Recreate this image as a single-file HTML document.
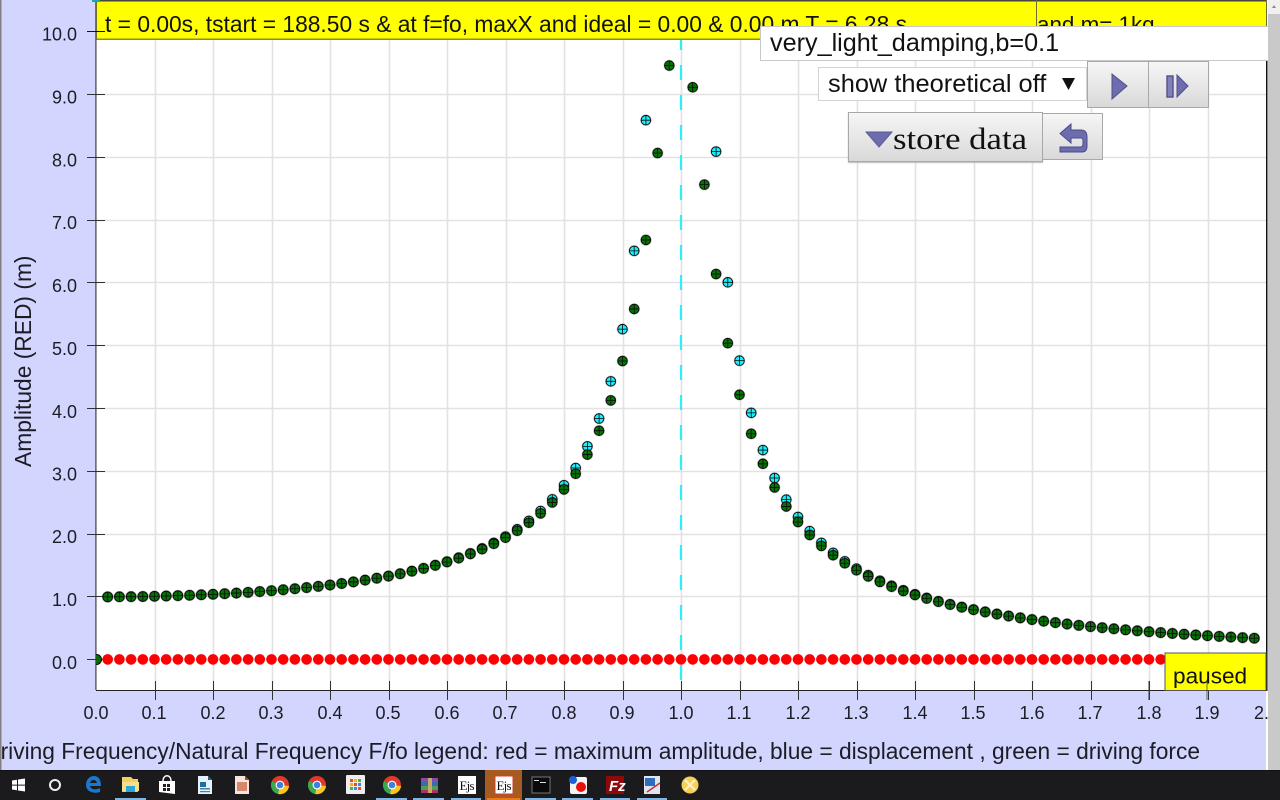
<!DOCTYPE html>
<html>
<head>
<meta charset="utf-8">
<style>
html,body{margin:0;padding:0;width:1280px;height:800px;overflow:hidden;background:#fff}
#root{position:relative;width:1280px;height:800px;overflow:hidden;font-family:"Liberation Sans",Arial,sans-serif;color:#111}
.abs{position:absolute}
svg{position:absolute;left:0;top:0;display:block}
.btn{position:absolute;box-sizing:border-box;background:linear-gradient(#f6f6f6,#d9d9d9);border:1px solid #a8a8a8}
</style>
</head>
<body>
<div id="root">
<svg id="main" width="1280" height="800" viewBox="0 0 1280 800" xmlns="http://www.w3.org/2000/svg" font-family="Liberation Sans, Arial, sans-serif">
  <rect x="0" y="0" width="1280" height="800" fill="#fff"/>
  <rect x="0" y="0" width="1266" height="770" fill="#d2d6fe"/>
  <rect x="0" y="0" width="1.5" height="770" fill="#808080"/>
  <rect x="1268" y="14" width="12" height="756" fill="#c9c9c9"/>
  <rect x="1268" y="0" width="12" height="14" fill="#f0f0f0"/>
  <path d="M1272 8L1274 5L1276 8Z" fill="#888"/>
  <rect x="96" y="39" width="1170" height="651" fill="#fff"/>
  <g id="grid" stroke="#e2e2e2" stroke-width="1.6" fill="none"></g>
  <rect x="95" y="0" width="1.7" height="690" fill="#707070"/>
  <rect x="96" y="690" width="1170" height="1" fill="#222"/>
  <rect x="1266" y="61" width="1.5" height="630" fill="#111"/>
  <line x1="681" y1="35" x2="681" y2="690" stroke="#2ff0fa" stroke-width="2.2" stroke-dasharray="15 15"/>
  <g id="ticks" stroke="#333" stroke-width="1"></g>
  <svg x="96" y="39" width="1170" height="651" viewBox="96 39 1170 651"><g id="dots"></g></svg>

  <g fill="#1c1c24" font-size="18" text-anchor="end">
    <text x="77" y="40.5">10.0</text><text x="77" y="103.5">9.0</text><text x="77" y="166.5">8.0</text>
    <text x="77" y="229">7.0</text><text x="77" y="292">6.0</text><text x="77" y="355">5.0</text>
    <text x="77" y="418">4.0</text><text x="77" y="480.5">3.0</text><text x="77" y="543">2.0</text>
    <text x="77" y="606">1.0</text><text x="77" y="669">0.0</text>
  </g>
  <g fill="#1c1c24" font-size="18" text-anchor="middle">
    <text x="96" y="719">0.0</text><text x="154" y="719">0.1</text><text x="213" y="719">0.2</text>
    <text x="271" y="719">0.3</text><text x="330" y="719">0.4</text><text x="388" y="719">0.5</text>
    <text x="447" y="719">0.6</text><text x="505" y="719">0.7</text><text x="564" y="719">0.8</text>
    <text x="622" y="719">0.9</text><text x="681" y="719">1.0</text><text x="739" y="719">1.1</text>
    <text x="798" y="719">1.2</text><text x="856" y="719">1.3</text><text x="915" y="719">1.4</text>
    <text x="973" y="719">1.5</text><text x="1032" y="719">1.6</text><text x="1090" y="719">1.7</text>
    <text x="1149" y="719">1.8</text><text x="1207" y="719">1.9</text>
  </g>
  <text x="1254" y="719" font-size="18" fill="#1c1c24">2.</text>
  <text transform="translate(31,467) rotate(-90)" font-size="22.8" fill="#1c1c24">Amplitude (RED) (m)</text>
  <text x="1200" y="759" text-anchor="end" font-size="22.76" fill="#1c1c24">riving Frequency/Natural Frequency F/fo legend: red = maximum amplitude, blue = displacement , green = driving force</text>

  <!-- yellow top bar -->
  <rect x="96" y="1" width="1171" height="38" fill="#ffff00"/>
  <rect x="96" y="0" width="1171" height="1.5" fill="#444"/>
  <rect x="96" y="38.5" width="1171" height="1.5" fill="#8f8f20"/>
  <rect x="96" y="0" width="1" height="40" fill="#6d6d30"/>
  <rect x="92" y="0" width="8" height="2" fill="#18a8b0"/>
  <rect x="1036" y="0" width="1" height="30" fill="#6d6d30"/>
  <rect x="1266" y="0" width="1" height="30" fill="#6d6d30"/>
  <line x1="87" y1="31.5" x2="105" y2="31.5" stroke="#111" stroke-width="1"/>
  <text x="105" y="32" font-size="22.8" fill="#111">t = 0.00s, tstart = 188.50 s &amp; at f=fo, maxX and ideal = 0.00 &amp; 0.00 m T = 6.28 s</text>
  <text x="1037" y="32" font-size="22.4" fill="#111">and m= 1kg</text>

  <!-- paused -->
  <rect x="1165" y="653" width="101" height="37.5" fill="#ffff00" stroke="#555" stroke-width="1"/>
  <text x="1173" y="683.5" font-size="22.6" fill="#111">paused</text>
  <line x1="1149" y1="681" x2="1149" y2="700" stroke="#333" stroke-width="1"/>
  <line x1="1207" y1="681" x2="1207" y2="700" stroke="#333" stroke-width="1" opacity=".7"/>
</svg>

<!-- text input -->
<div class="abs" style="left:760px;top:26px;width:508px;height:35px;box-sizing:border-box;background:#fff;border:1px solid #c8c8c8;border-right:0;font-size:25.2px;line-height:33px;padding-left:9px;color:#111;white-space:nowrap">very_light_damping,b=0.1</div>
<!-- select -->
<div class="abs" style="left:818px;top:67px;width:269px;height:34px;box-sizing:border-box;background:#fff;border:1px solid #d4d4d4;font-size:25.4px;line-height:32px;padding-left:9px;color:#111;white-space:nowrap">show theoretical off</div>
<svg width="1280" height="800" style="pointer-events:none">
  <path d="M1062 78H1075L1068.5 90Z" fill="#111"/>
</svg>

<!-- buttons -->
<div class="btn" style="left:1087px;top:61px;width:62px;height:47px"></div>
<div class="btn" style="left:1148px;top:61px;width:61px;height:47px"></div>
<div class="btn" style="left:848px;top:112px;width:195px;height:50px;box-shadow:0 1px 1px #bbb"></div>
<div class="btn" style="left:1042px;top:113px;width:61px;height:47px"></div>
<svg width="1280" height="800" style="pointer-events:none">
  <path d="M1112 74L1127 86L1112 99Z" fill="#6c6cae" stroke="#50508c" stroke-width="1"/>
  <rect x="1167" y="76" width="6" height="21" fill="#8080bb" stroke="#50508c" stroke-width="1.4"/>
  <path d="M1177 75L1188 86L1177 97Z" fill="#6c6cae" stroke="#50508c" stroke-width="1"/>
  <path d="M866 132H892L879 147Z" fill="#6c6cae" stroke="#5c5c98" stroke-width="1"/>
  <path d="M1071 124L1060 133.5L1071 143V138H1081Q1083 138 1083 141V144Q1083 147 1080 147H1060V152H1082Q1087 152 1087 146V137Q1087 130 1081 130H1071Z" fill="#6c6cae" stroke="#4c4c88" stroke-width="1"/>
  <text x="893" y="149" font-family="Liberation Serif, serif" font-size="31" fill="#111" textLength="134" lengthAdjust="spacingAndGlyphs">store data</text>
</svg>

<!-- taskbar -->
<div class="abs" style="left:0;top:770px;width:1280px;height:30px;background:#1b1b1d;border-top:1px solid #111;box-sizing:border-box"></div>
<div class="abs" style="left:485px;top:770px;width:37px;height:30px;background:#a65c20"></div>
<svg width="1280" height="800" style="pointer-events:none" font-family="Liberation Serif, serif">
  <g fill="#7fb6e6">
    <rect x="115" y="798" width="31" height="2"/><rect x="376" y="798" width="31" height="2"/>
    <rect x="413" y="798" width="31" height="2"/><rect x="451" y="798" width="30" height="2"/>
    <rect x="487" y="798" width="33" height="2" fill="#f07818"/><rect x="525" y="798" width="31" height="2"/>
    <rect x="562" y="798" width="31" height="2"/><rect x="600" y="798" width="30" height="2"/>
    <rect x="637" y="798" width="30" height="2"/>
  </g>
  <!-- windows -->
  <path d="M12 780.5L17 779.7V784.6H12ZM18 779.5L25 778.5V784.6H18ZM12 785.6H17V790.3L12 789.5ZM18 785.6H25V791.5L18 790.5Z" fill="#fff"/>
  <!-- cortana -->
  <circle cx="55" cy="785" r="5" fill="none" stroke="#eee" stroke-width="2"/>
  <!-- edge -->
  <path d="M86 785C86 779 90 776 94 776C98 776 101 779 101 786H90C91 790 96 790 100 788V792C94 794 86 792 86 785ZM90 783H97C96 779 91 779 90 783Z" fill="#1878d2"/>
  <!-- explorer -->
  <path d="M122 777H131L133 779H138V792H122Z" fill="#f4ce62"/><rect x="122" y="782" width="17" height="9" fill="#f8e08a"/>
  <rect x="126" y="786" width="9" height="6" fill="#2aa8dc"/>
  <!-- store -->
  <path d="M159 781H175V794L159 792Z" fill="#fff"/><path d="M163 781C163 774 171 774 171 781" fill="none" stroke="#fff" stroke-width="1.4"/>
  <rect x="163" y="784" width="3" height="3" fill="#222"/><rect x="167" y="784" width="3" height="3" fill="#222"/><rect x="163" y="788" width="3" height="3" fill="#222"/><rect x="167" y="788" width="3" height="3" fill="#222"/>
  <!-- writer -->
  <path d="M198 776H208L212 780V794H198Z" fill="#e8f2f8"/><path d="M208 776L212 780H208Z" fill="#205f8a"/>
  <rect x="200" y="782" width="6" height="5" fill="#1f6f9c"/><rect x="200" y="788" width="10" height="1.5" fill="#3a86b0"/><rect x="200" y="791" width="10" height="1.2" fill="#3a86b0"/>
  <!-- impress -->
  <path d="M235 776H245L249 780V794H235Z" fill="#f4e6de"/><path d="M245 776L249 780H245Z" fill="#a04a20"/>
  <rect x="237" y="782" width="10" height="9" fill="#d8886a"/>
  <!-- chrome helper instances -->
  <g id="chromes"></g>
  <!-- apps -->
  <rect x="346" y="775" width="19" height="19" rx="1" fill="#eeeeee"/>
  <g>
    <rect x="350" y="779" width="3" height="3" fill="#e84a3c"/><rect x="354" y="779" width="3" height="3" fill="#f4b400"/><rect x="358" y="779" width="3" height="3" fill="#4caf50"/>
    <rect x="350" y="783" width="3" height="3" fill="#f4b400"/><rect x="354" y="783" width="3" height="3" fill="#e84a3c"/><rect x="358" y="783" width="3" height="3" fill="#2f8fdd"/>
    <rect x="350" y="787" width="3" height="3" fill="#4caf50"/><rect x="354" y="787" width="3" height="3" fill="#2f8fdd"/><rect x="358" y="787" width="3" height="3" fill="#e84a3c"/>
  </g>
  <!-- winrar -->
  <rect x="421" y="778" width="17" height="4" fill="#8a4aa8"/><rect x="421" y="782" width="17" height="4" fill="#3c68b8"/><rect x="421" y="786" width="17" height="4" fill="#4fa04a"/><rect x="421" y="790" width="17" height="3" fill="#a8326c"/><rect x="428" y="778" width="4" height="15" fill="#c8a868"/>
  <!-- ejs -->
  <rect x="458" y="776" width="18" height="18" fill="#fff"/><text x="459.5" y="790" font-size="13" fill="#111" textLength="15">Ejs</text>
  <rect x="495" y="776" width="18" height="18" fill="#fff" stroke="#d04030" stroke-width="1"/><text x="496.5" y="790" font-size="13" fill="#111" textLength="15">Ejs</text>
  <!-- cmd -->
  <rect x="532" y="777" width="18" height="16" fill="#0a0a0a" stroke="#777" stroke-width="1"/><rect x="534" y="780" width="5" height="1" fill="#ddd"/><rect x="540" y="782" width="6" height="1" fill="#ddd"/>
  <!-- red/blue -->
  <rect x="570" y="777" width="17" height="17" rx="2" fill="#f4f4f4"/><circle cx="573" cy="780" r="4" fill="#1f5fd8"/><circle cx="581" cy="787" r="5" fill="#e80f0f"/>
  <!-- filezilla -->
  <rect x="606" y="776" width="18" height="18" fill="#8c0a0a"/>
  <text x="609" y="791" font-family="Liberation Sans, sans-serif" font-weight="bold" font-style="italic" font-size="15" fill="#fff">Fz</text>
  <!-- tool -->
  <rect x="644" y="776" width="16" height="18" fill="#dfe6ee"/><rect x="645" y="778" width="10" height="8" fill="#2f6cc0"/><line x1="647" y1="792" x2="660" y2="783" stroke="#c83030" stroke-width="1.4"/>
  <!-- yellow ball -->
  <circle cx="690" cy="785" r="8.5" fill="#f6cf58"/><path d="M685 780L695 790M695 780L685 790" stroke="#fff2c8" stroke-width="2"/>
</svg>
<script>
(function(){
var NS="http://www.w3.org/2000/svg";
function el(p,n,a){var e=document.createElementNS(NS,n);for(var k in a)e.setAttribute(k,a[k]);p.appendChild(e);return e;}
var X=function(r){return 96+r*585;},Y=function(a){return 659.7-a*62.8;};
var g=document.getElementById('grid'),t=document.getElementById('ticks'),i;
for(i=1;i<20;i++){var x=Math.round(X(i/10))+.5;el(g,'line',{x1:x,y1:39,x2:x,y2:690});el(t,'line',{x1:x,y1:681,x2:x,y2:700});}
for(i=0;i<10;i++){var y=Math.floor(Y(i))+.5;el(g,'line',{x1:96,y1:y,x2:1266,y2:y});el(t,'line',{x1:87,y1:y,x2:105,y2:y});}
var d=document.getElementById('dots');
function dot(cx,cy,f,r){
 el(d,'circle',{cx:cx,cy:cy,r:r+1,fill:'#000',opacity:.2});
 el(d,'circle',{cx:cx,cy:cy,r:r,fill:f,stroke:'#0a0a0a','stroke-width':.9});
 el(d,'path',{d:'M'+(cx-r)+' '+cy+'H'+(cx+r)+'M'+cx+' '+(cy-r)+'V'+(cy+r),stroke:'#0a0a0a','stroke-width':.8,fill:'none'});
}
for(i=1;i<100;i++){var r=i*.02,a=1/Math.abs(1-r*r);if(i===50)continue;if(a<10.5)dot(X(r),Y(a),'#19f0ff',4.8);}
el(d,'circle',{cx:96.5,cy:659.5,r:5,fill:'#0a6a0a',stroke:'#0a0a0a','stroke-width':1});
for(i=1;i<100;i++){var r2=i*.02;el(d,'circle',{cx:X(r2),cy:659.4,r:5.3,fill:'#fd0004'});}
for(i=1;i<100;i++){var q=i*.02,A=1/Math.sqrt(Math.pow(1-q*q,2)+Math.pow(.1*q,2));dot(X(q),Y(A),'#047404',4.8);}
var c=document.getElementById('chromes');
[280,317,392].forEach(function(x){
 var y=785;
 el(c,'circle',{cx:x,cy:y,r:9,fill:'#e0392c'});
 el(c,'path',{d:'M'+x+' '+y+'L'+(x+9)+' '+(y+1)+'A9 9 0 0 1 '+(x-2)+' '+(y+9)+'Z',fill:'#f8c822'});
 el(c,'path',{d:'M'+x+' '+y+'L'+(x-2)+' '+(y+9)+'A9 9 0 0 1 '+(x-8)+' '+(y-4)+'Z',fill:'#3aa853'});
 el(c,'circle',{cx:x,cy:y,r:4.4,fill:'#fff'});
 el(c,'circle',{cx:x,cy:y,r:3.3,fill:'#3b82e0'});
});
})();
</script>
</div>
</body>
</html>
